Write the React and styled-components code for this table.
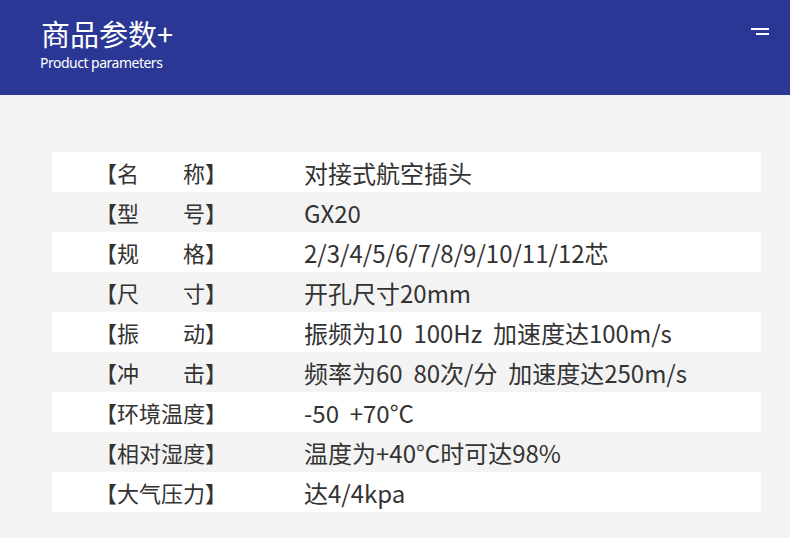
import React from 'react';
import styled, { createGlobalStyle } from 'styled-components';

const params = [
  { label: '【名　　称】', value: '对接式航空插头' },
  { label: '【型　　号】', value: 'GX20' },
  { label: '【规　　格】', value: '2/3/4/5/6/7/8/9/10/11/12芯' },
  { label: '【尺　　寸】', value: '开孔尺寸20mm' },
  { label: '【振　　动】', value: '振频为10  100Hz  加速度达100m/s' },
  { label: '【冲　　击】', value: '频率为60  80次/分  加速度达250m/s' },
  { label: '【环境温度】', value: '-50  +70°C' },
  { label: '【相对湿度】', value: '温度为+40°C时可达98%' },
  { label: '【大气压力】', value: '达4/4kpa' },
];

function App() {
  return (
    <>
      <GlobalStyle />
      <Page>
        <Header>
          <TitleBlock>
            <Title>商品参数+</Title>
            <Subtitle>Product parameters</Subtitle>
          </TitleBlock>
          <MenuIcon>
            <MenuLine />
            <MenuLine short />
          </MenuIcon>
        </Header>
        <Table>
          {params.map((p, i) => (
            <Row key={p.label} odd={i % 2 === 1}>
              <Label>{p.label}</Label>
              <Value>{p.value}</Value>
            </Row>
          ))}
        </Table>
      </Page>
    </>
  );
}

const GlobalStyle = createGlobalStyle`
  html, body {
    margin: 0;
    padding: 0;
    background: #f3f3f3;
  }
  body {
    font-family: "Noto Sans CJK SC", "Noto Sans", sans-serif;
  }
`;

const Page = styled.div`
  width: 790px;
  height: 538px;
  background: #f3f3f3;
  overflow: hidden;
`;

const Header = styled.div`
  height: 95px;
  background: #2a3795;
  display: flex;
  justify-content: space-between;
  align-items: flex-start;
  padding: 0 21px 0 40px;
  box-sizing: border-box;
`;

const TitleBlock = styled.div`
  display: flex;
  flex-direction: column;
  padding-top: 17px;
`;

const Title = styled.div`
  font-family: "Noto Sans CJK SC", sans-serif;
  color: #fff;
  font-size: 29px;
  line-height: 32px;
  margin-left: 1px;
`;

const Subtitle = styled.div`
  font-family: "Noto Sans", sans-serif;
  color: #fff;
  font-size: 14px;
  line-height: 18px;
  letter-spacing: -0.5px;
  margin-top: 5px;
`;

const MenuIcon = styled.div`
  display: flex;
  flex-direction: column;
  align-items: flex-end;
  gap: 3px;
  padding-top: 28px;
`;

const MenuLine = styled.div`
  width: ${p => (p.short ? '13px' : '18px')};
  height: 2px;
  background: #fff;
`;

const Table = styled.div`
  margin: 57px 29px 0 52px;
  display: flex;
  flex-direction: column;
`;

const Row = styled.div`
  height: 40px;
  display: flex;
  align-items: center;
  background: ${p => (p.odd ? '#f3f3f3' : '#ffffff')};
  color: #333;
`;

const Label = styled.div`
  width: 252px;
  padding-left: 43px;
  box-sizing: border-box;
  font-size: 22px;
  white-space: pre;
`;

const Value = styled.div`
  font-size: 24px;
  white-space: pre;
`;

export default App;
